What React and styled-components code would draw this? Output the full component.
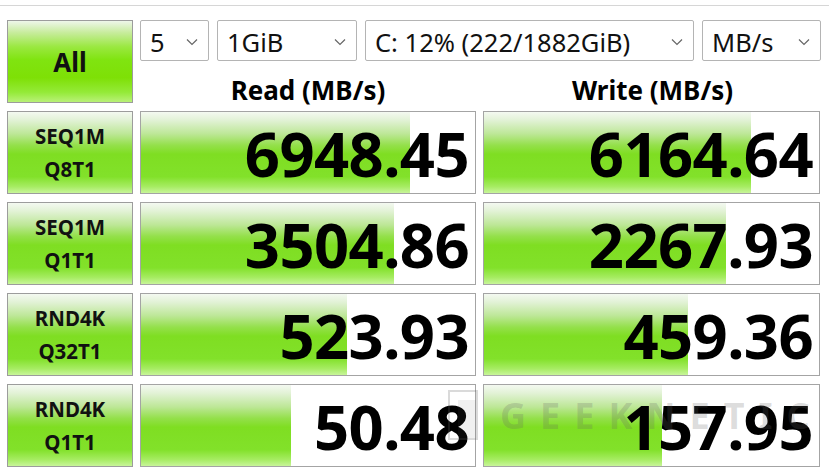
import React from "react";
import styled, { createGlobalStyle } from "styled-components";

const GlobalStyle = createGlobalStyle`
  html, body {
    margin: 0;
    padding: 0;
    background: #ffffff;
    font-family: "Noto Sans", "Open Sans", sans-serif;
  }
`;

const greenFill = `linear-gradient(
  to bottom,
  #f4f9f1 0%,
  #e2f2d6 10%,
  #bde797 27%,
  #94e04b 41%,
  #7fde22 52%,
  #82e12a 80%,
  #a6ec62 92%,
  #c8f59a 100%
)`;

const Window = styled.div`
  position: relative;
  width: 829px;
  height: 470px;
  overflow: hidden;
  background: #fff;
`;

const TitleEdge = styled.div`
  height: 5px;
  border-bottom: 1px solid #d6d6d6;
  background: #fff;
`;

const Board = styled.div`
  display: grid;
  grid-template-columns: 126px 336px 337px;
  column-gap: 7px;
  row-gap: 8px;
  padding: 14px 0 0 7px;
`;

const Head = styled.div`
  display: grid;
  grid-column: 2 / 4;
  grid-template-columns: 336px 337px;
  grid-template-rows: 41px 42px;
  column-gap: 8px;
`;

const Selects = styled.div`
  grid-column: 1 / 3;
  display: flex;
  gap: 8px;
`;

const Select = styled.div`
  box-sizing: border-box;
  width: ${(p) => p.$w}px;
  height: 41px;
  border: 1px solid #b4b4b4;
  border-radius: 2px;
  background: #fff;
  display: flex;
  align-items: center;
  justify-content: space-between;
  padding: 3px 10px 0 9px;
  font-size: 25.5px;
  color: #111;
  white-space: nowrap;
`;

const ColTitle = styled.div`
  display: flex;
  align-items: flex-end;
  justify-content: center;
  font-size: 26px;
  font-weight: 700;
  line-height: 1;
  color: #000;
  padding-bottom: 0;
`;

const GreenButton = styled.div`
  box-sizing: border-box;
  height: 83px;
  border: 1px solid #9c9c9c;
  background: ${(p) =>
    p.$big
      ? `linear-gradient(to bottom, #eef6ea 0%, #c8ec9e 14%, #9ae840 32%, #80e410 48%, #7ee006 70%, #94ea38 88%, #b9f178 100%)`
      : greenFill};
  display: flex;
  flex-direction: column;
  align-items: center;
  justify-content: center;
  font-weight: 700;
  color: #111;
  font-size: ${(p) => (p.$big ? 26 : 20.5)}px;
  line-height: ${(p) => (p.$big ? 1 : "33px")};
`;

const Cell = styled.div`
  position: relative;
  box-sizing: border-box;
  height: 83px;
  border: 1px solid #a4a4a4;
  background: #fff;
  overflow: hidden;
`;

const Bar = styled.div`
  position: absolute;
  left: 0;
  top: 0;
  bottom: 0;
  background: ${greenFill};
`;

const Value = styled.div`
  position: relative;
  height: 100%;
  display: flex;
  align-items: center;
  justify-content: flex-end;
  padding-right: 6px;
  font-size: 61.5px;
  font-weight: 700;
  color: #000;
  letter-spacing: -0.6px;
`;

const Watermark = styled.div`
  position: absolute;
  left: 448px;
  top: 390px;
  display: flex;
  align-items: center;
  gap: 22px;
  pointer-events: none;
  color: rgba(100, 100, 100, 0.24);
`;

const WaterText = styled.span`
  font-family: "Noto Sans", sans-serif;
  font-size: 36px;
  font-weight: 700;
  letter-spacing: 14px;
`;

const Chevron = () => (
  <svg width="12" height="8" viewBox="0 0 12 8">
    <polyline points="1,1.5 6,6.5 11,1.5" fill="none" stroke="#666" strokeWidth="1.2" />
  </svg>
);

const Logo = () => (
  <svg width="30" height="50" viewBox="0 0 30 50">
    <rect x="1" y="1" width="28" height="48" fill="none" stroke="currentColor" strokeWidth="2" />
    <rect x="10" y="10" width="18" height="38" fill="currentColor" opacity="0.4" />
  </svg>
);

const rows = [
  { a: "SEQ1M", b: "Q8T1", read: "6948.45", rp: 80.6, write: "6164.64", wp: 79.8 },
  { a: "SEQ1M", b: "Q1T1", read: "3504.86", rp: 75.8, write: "2267.93", wp: 72.3 },
  { a: "RND4K", b: "Q32T1", read: "523.93", rp: 61.8, write: "459.36", wp: 61 },
  { a: "RND4K", b: "Q1T1", read: "50.48", rp: 45, write: "157.95", wp: 53 },
];

const App = () => {
  return (
    <Window>
      <GlobalStyle />
      <TitleEdge />
      <Board>
        <GreenButton $big>All</GreenButton>
        <Head>
          <Selects>
            <Select $w={69}>
              <span>5</span>
              <Chevron />
            </Select>
            <Select $w={140}>
              <span>1GiB</span>
              <Chevron />
            </Select>
            <Select $w={329}>
              <span>C: 12% (222/1882GiB)</span>
              <Chevron />
            </Select>
            <Select $w={119}>
              <span>MB/s</span>
              <Chevron />
            </Select>
          </Selects>
          <ColTitle>Read (MB/s)</ColTitle>
          <ColTitle>Write (MB/s)</ColTitle>
        </Head>
        {rows.map((r, i) => (
          <React.Fragment key={i}>
            <GreenButton>
              <span>{r.a}</span>
              <span>{r.b}</span>
            </GreenButton>
            <Cell>
              <Bar style={{ width: `${r.rp}%` }} />
              <Value>{r.read}</Value>
            </Cell>
            <Cell>
              <Bar style={{ width: `${r.wp}%` }} />
              <Value>{r.write}</Value>
            </Cell>
          </React.Fragment>
        ))}
      </Board>
      <Watermark>
        <Logo />
        <WaterText>GEEKNETIC</WaterText>
      </Watermark>
    </Window>
  );
};

export default App;
